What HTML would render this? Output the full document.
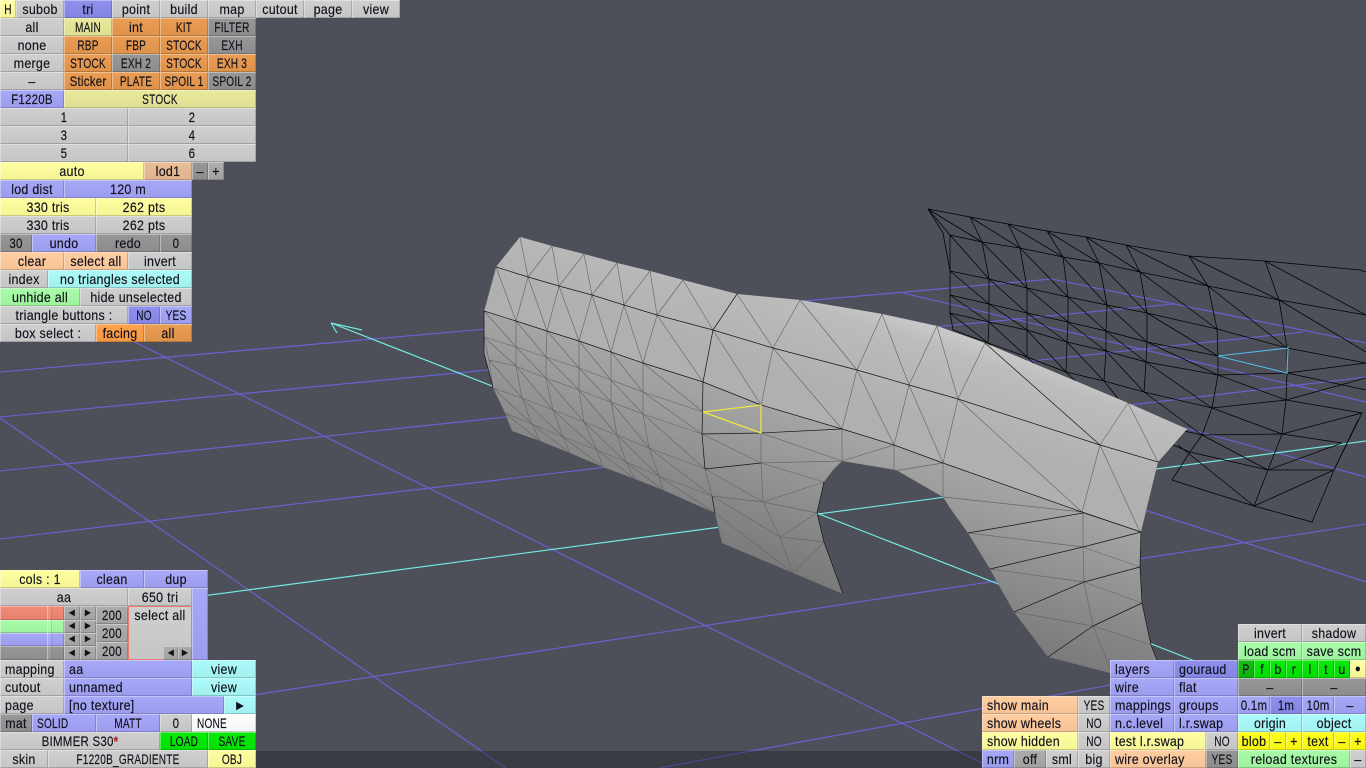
<!DOCTYPE html>
<html><head><meta charset="utf-8"><title>editor</title>
<style>
html,body{margin:0;padding:0;width:1366px;height:768px;overflow:hidden;background:#4d5058}
#v{position:relative;width:1366px;height:768px;overflow:hidden}
svg{position:absolute;left:0;top:0;display:block}
i{position:absolute;display:block;height:18px;font:normal 14px/18px "Liberation Sans",sans-serif;letter-spacing:.3px;color:#10101a;-webkit-text-stroke:.15px #10101a;white-space:nowrap;overflow:hidden;box-sizing:border-box;background-image:linear-gradient(rgba(255,255,255,.05),rgba(0,0,0,.04));box-shadow:inset 1px 1px 0 rgba(255,255,255,.36),inset -1px -1px 0 rgba(0,0,0,.18)}
u{text-decoration:none;position:absolute;left:50%;top:0;transform:translateX(-50%) scaleX(.89)}
u.U{transform:translateX(-50%) scaleX(.72)}
u.N{transform:translateX(-50%) scaleX(.82)}
.l u{left:5px;transform-origin:0 50%;transform:scaleX(.89)}
.l u.U{transform:scaleX(.72)}
.g{background-color:#cdcdcd}.d{background-color:#929292}.m{background-color:#a8a8a8}
.b{background-color:#a3a3f8}.k{background-color:#8a8aec}
.y{background-color:#ffff9c}.p{background-color:#e8e898}.Y{background-color:#ffff10}
.o{background-color:#e8984c}.O{background-color:#ff9e44}.c{background-color:#ffcb9c}.t{background-color:#e8bb92}
.a{background-color:#a8fafa}.n{background-color:#a4fca4}.G{background-color:#00e800}.P{background-color:#0cb80c}
.w{background-color:#fff}.r{background-color:#f08672}
.s u{font-size:11px}
.h{background:rgba(255,255,255,.1);box-shadow:inset 1px 0 0 rgba(255,255,255,.35),inset -1px 0 0 rgba(0,0,0,.12)}
</style></head><body><div id="v">
<svg width="1366" height="768" viewBox="0 0 1366 768" xmlns="http://www.w3.org/2000/svg">
<defs>
<linearGradient id="lo" gradientUnits="userSpaceOnUse" x1="700" y1="374" x2="650" y2="526"><stop offset="0" stop-color="#a8a8a8"/><stop offset="1" stop-color="#7a7a7a"/></linearGradient>
<linearGradient id="hi" gradientUnits="userSpaceOnUse" x1="1060" y1="470" x2="1100" y2="350"><stop offset="0" stop-color="#b0b0b0"/><stop offset=".6" stop-color="#bcbcbc"/><stop offset="1" stop-color="#dcdcdc"/></linearGradient>
</defs>
<g fill="none" stroke="#6a62dc" stroke-width="1.1">
<path d="M0 372L1052 279L1366 343"/>
<path d="M0 417L1173 304"/>
<path d="M0 471L1303 332"/>
<path d="M0 539L1366 377"/>
<path d="M0 734L1366 524"/>
<path d="M659 768L1110 685"/>
<path d="M903 293L1366 402"/>
<path d="M1100 405L1366 477"/>
<path d="M1000 463L1366 582"/>
<path d="M0 275L992 768"/>
<path d="M0 418L506 768"/>
</g>
<g fill="none" stroke="#74e6e0" stroke-width="1.2">
<path d="M0 623L1366 441"/>
<path d="M1200 663L331 323M331 323L362 330M331 323L337 333"/>
</g>
<!-- wire copy -->
<g fill="none" stroke="#000" stroke-width=".75">
<path d="M928 209L970 217L1008 224L1047 231L1086 237L1126 245L1189 256L1265 261L1360 270L1366 272"/>
<path d="M928 209L950 235L982 242L1020 248L1063 257L1099 263L1140 272L1208 286L1279 300L1366 315"/>
<path d="M928 209L943 233L950 271"/>
<path d="M950 271L989 279L1027 288L1068 297L1107 305L1147 313L1217 329L1287 348L1366 363"/>
<path d="M950 295L989 304L1027 313L1068 322L1106 331L1147 342L1218 356"/>
<path d="M950 313L989 322L1027 330L1067 342L1106 351L1146 362L1218 375L1287 373L1366 363"/>
<path d="M953 330L988 343L1027 357L1066 372L1104 381L1144 392L1212 408L1286 400L1366 378"/>
<path d="M1025 375L1062 390L1100 405L1135 420L1202 435L1282 434L1342 443"/>
<path d="M928 209L982 242M970 217L982 242M970 217L1020 248M1008 224L1020 248M1008 224L1063 257M1047 231L1063 257M1047 231L1099 263M1086 237L1099 263M1086 237L1140 272M1126 245L1140 272M1126 245L1208 286M1265 261L1366 315"/>
<path d="M1189 256L1208 286L1217 329L1218 356L1218 375L1212 408L1202 435L1190 452L1172 480L1254 506L1312 522L1334 470L1362 413"/>
<path d="M1189 256L1279 300M1265 261L1279 300L1287 348L1287 373L1286 400L1282 434L1268 470L1254 506L1334 470"/>
<path d="M950 235L950 271L950 295L950 313L953 330M982 242L989 279L989 304L989 322L988 343M1020 248L1027 288L1027 313L1027 330L1027 357M1063 257L1068 297L1068 322L1067 342L1066 372M1099 263L1107 305L1106 331L1106 351L1104 381M1140 272L1147 313L1147 342L1146 362L1144 392"/>
<path d="M950 235L989 279M982 242L1027 288M1020 248L1068 297M1063 257L1107 305M1099 263L1147 313M1140 272L1217 329M1208 286L1287 348M1279 300L1366 352"/>
<path d="M950 271L989 304M989 279L1027 313M1027 288L1068 322M1068 297L1106 331M1107 305L1147 342M1147 313L1218 356"/>
<path d="M950 295L989 322M989 304L1027 330M1027 313L1067 342M1068 322L1106 351M1106 331L1146 362M1147 342L1218 375"/>
<path d="M950 313L988 343M989 322L1027 357M1027 330L1066 372M1067 342L1104 381M1106 351L1144 392M1146 362L1212 408"/>
<path d="M988 343L1025 375M1027 357L1062 390M1066 372L1100 405M1104 381L1135 420M1144 392L1202 435"/>
<path d="M1218 375L1286 400M1212 408L1282 434M1286 400L1362 413M1287 373L1366 390M1282 434L1362 413"/>
<path d="M1178 445L1254 506M1173 445L1190 452L1268 470M1202 435L1268 470M1342 443L1268 470M1358 420L1334 470"/>
</g>
<path d="M1268 470L1334 470" stroke="#222" stroke-width="1.3" fill="none"/>
<path d="M1218 356L1288 348L1287 373Z" fill="none" stroke="#55b8e6" stroke-width="1.1"/>
<!-- body -->
<path fill="url(#lo)" d="M520 237L552 246L584 254L617 263L650 271L683 280L737 294L800 300L882 314L937 326L985 343L1128 403L1187 429L1158 462L1141 532L1140 567L1142 603L1151 645L1157 660L1160 690L1110 673L1048 657L1014 612L997 582L990 569L968 533L950 508L943 497L896 470L842 461L833 470L824 482L817 513L824 542L843 594L793 573L722 543L715 513L663 490L635 479L603 467L570 453L540 441L512 431L505 413L493 388L484 353L484 311L496 267Z"/>
<path fill="url(#hi)" d="M520 237L552 246L584 254L617 263L650 271L683 280L737 294L800 300L882 314L937 326L985 343L1128 403L1187 429L1158 462L1140 532L1082 512L943 463L894 445L842 429L761 405L703 382L643 363L611 352L579 341L547 331L516 321L484 311L496 267Z"/>
<g fill="none" stroke="#666" stroke-width=".65">
<path d="M520 237L528 277M552 246L528 277M552 246L559 286M584 254L559 286M584 254L592 295M617 263L592 295M617 263L624 305M650 271L624 305M650 271L657 315M683 280L657 315M683 280L713 330M737 294L773 348M800 300L773 348M800 300L857 370M882 314L857 370M882 314L909 385M937 326L909 385M937 326L958 399M985 343L958 399M1128 403L1100 445M1128 403L1158 462"/>
<path d="M496 267L484 311M496 267L516 321M528 277L516 321M528 277L547 331M559 286L547 331M559 286L579 341M592 295L579 341M592 295L611 352M624 305L611 352M624 305L643 363M657 315L643 363M657 315L703 382M713 330L761 405M773 348L761 405M773 348L842 429M857 370L842 429M857 370L894 445M909 385L894 445M909 385L943 463M958 399L943 463M958 399L1082 512M1100 445L1082 512M1100 445L1140 532"/>
<path d="M484 311L484 337L489 360L493 388L505 413L512 431M516 321L516 347L516 366L522 398L532 424L540 441M547 331L546 357L546 378L553 410L563 437L570 453M579 341L579 368L579 390L584 422L597 450L603 467M611 352L611 380L611 402L617 435L626 462L635 479M643 363L643 392L643 414L649 448L659 476L663 490"/>
<path d="M484 337L516 347L546 357L579 368L611 380L643 392L703 412M489 360L516 366L546 378L579 390L611 402L643 414L702 434M493 388L522 398L553 410L584 422L617 435L649 448L705 469M505 413L532 424L563 437L597 450L626 462L659 476L712 496"/>
<path d="M484 311L516 347M516 321L546 357M547 331L579 368M579 341L611 380M611 352L643 392M643 363L703 412M484 337L516 366M516 347L546 378M546 357L579 390M579 368L611 402M611 380L643 414M643 392L702 434M489 360L522 398M516 366L553 410M546 378L584 422M579 390L617 435M611 402L649 448M643 414L705 469M493 388L532 424M522 398L563 437M553 410L597 450M584 422L626 462M617 435L659 476M649 448L712 496M505 413L540 441M532 424L570 453M563 437L603 467M597 450L635 479M626 462L663 490M659 476L715 513"/>
<path d="M761 433L761 463L763 502M702 434L761 463M761 433L842 461M761 463L842 461M761 463L824 482M705 469L763 502M705 469L712 496L715 513L722 543M712 496L763 502L824 482M763 502L817 513M712 496L780 537M715 513L793 573M763 502L780 537L793 573M780 537L817 513M780 537L824 542M793 573L824 542M842 429L842 461M894 445L894 471M943 463L943 497M842 461L894 445M894 471L943 463"/>
<path d="M943 497L1082 512M968 533L1083 547M990 569L1084 582M1014 612L1093 626M1083 513L1083 547L1084 582L1093 626L1112 673M1083 513L1141 532M1083 547L1140 567M1084 582L1142 603M1093 626L1151 645"/>
</g>
<g fill="none" stroke="#151515" stroke-width=".7">
<path d="M496 267L528 277L559 286L592 295L624 305L657 315L713 330L773 348L857 370L909 385L958 399L1100 445L1158 462"/>
<path d="M484 311L516 321L547 331L579 341L611 352L643 363L703 382L761 405L842 429L894 445L943 463L1082 512L1141 532"/>
<path d="M705 469L702 434L703 382M737 294L713 330L703 382M985 343L1100 445M702 434L761 433L842 429M705 469L761 463M968 533L1083 513M990 569L1083 547M1014 612L1084 582M1048 657L1093 626M1083 547L1141 532M1084 582L1140 567M1093 626L1142 603"/>
<path d="M824 482L817 513L824 542L843 594M1141 532L1140 567L1142 603L1151 645L1157 660M484 311L484 353L493 388M712 496L715 513"/>
</g>
<path d="M703 412L761 405L761 433Z" fill="none" stroke="#f0e840" stroke-width="1.2"/>
<rect x="0" y="751" width="1366" height="17" fill="#1c1c22" fill-opacity=".38"/>
</svg>

<i class="y" style="left:0;top:0;width:16px"><u class="U">H</u></i>
<i class="g" style="left:16px;top:0;width:48px"><u>subob</u></i>
<i class="k" style="left:64px;top:0;width:48px"><u>tri</u></i>
<i class="g" style="left:112px;top:0;width:48px"><u>point</u></i>
<i class="g" style="left:160px;top:0;width:48px"><u>build</u></i>
<i class="g" style="left:208px;top:0;width:48px"><u>map</u></i>
<i class="g" style="left:256px;top:0;width:48px"><u>cutout</u></i>
<i class="g" style="left:304px;top:0;width:48px"><u>page</u></i>
<i class="g" style="left:352px;top:0;width:48px"><u>view</u></i>

<i class="g" style="left:0;top:18px;width:64px"><u>all</u></i>
<i class="p" style="left:64px;top:18px;width:48px"><u class="U">MAIN</u></i>
<i class="o" style="left:112px;top:18px;width:48px"><u>int</u></i>
<i class="o" style="left:160px;top:18px;width:48px"><u class="U">KIT</u></i>
<i class="d" style="left:208px;top:18px;width:48px"><u class="U">FILTER</u></i>
<i class="g" style="left:0;top:36px;width:64px"><u>none</u></i>
<i class="o" style="left:64px;top:36px;width:48px"><u class="U">RBP</u></i>
<i class="o" style="left:112px;top:36px;width:48px"><u class="U">FBP</u></i>
<i class="o" style="left:160px;top:36px;width:48px"><u class="U">STOCK</u></i>
<i class="d" style="left:208px;top:36px;width:48px"><u class="U">EXH</u></i>
<i class="g" style="left:0;top:54px;width:64px"><u>merge</u></i>
<i class="o" style="left:64px;top:54px;width:48px"><u class="U">STOCK</u></i>
<i class="d" style="left:112px;top:54px;width:48px"><u class="U">EXH 2</u></i>
<i class="o" style="left:160px;top:54px;width:48px"><u class="U">STOCK</u></i>
<i class="o" style="left:208px;top:54px;width:48px"><u class="U">EXH 3</u></i>
<i class="g" style="left:0;top:72px;width:64px"><u>–</u></i>
<i class="o" style="left:64px;top:72px;width:48px"><u class="N">Sticker</u></i>
<i class="o" style="left:112px;top:72px;width:48px"><u class="U">PLATE</u></i>
<i class="o" style="left:160px;top:72px;width:48px"><u class="U">SPOIL 1</u></i>
<i class="d" style="left:208px;top:72px;width:48px"><u class="U">SPOIL 2</u></i>
<i class="b" style="left:0;top:90px;width:64px"><u class="N">F1220B</u></i>
<i class="p" style="left:64px;top:90px;width:192px"><u class="U">STOCK</u></i>
<i class="g" style="left:0;top:108px;width:128px"><u class="N">1</u></i>
<i class="g" style="left:128px;top:108px;width:128px"><u class="N">2</u></i>
<i class="g" style="left:0;top:126px;width:128px"><u class="N">3</u></i>
<i class="g" style="left:128px;top:126px;width:128px"><u class="N">4</u></i>
<i class="g" style="left:0;top:144px;width:128px"><u class="N">5</u></i>
<i class="g" style="left:128px;top:144px;width:128px"><u class="N">6</u></i>
<i class="y" style="left:0;top:162px;width:144px"><u>auto</u></i>
<i class="t" style="left:144px;top:162px;width:48px"><u>lod1</u></i>
<i class="d" style="left:192px;top:162px;width:16px"><u>–</u></i>
<i class="m" style="left:208px;top:162px;width:16px"><u>+</u></i>
<i class="b" style="left:0;top:180px;width:64px"><u>lod dist</u></i>
<i class="b" style="left:64px;top:180px;width:128px"><u>120 m</u></i>
<i class="y" style="left:0;top:198px;width:96px"><u>330 tris</u></i>
<i class="y" style="left:96px;top:198px;width:96px"><u>262 pts</u></i>
<i class="g" style="left:0;top:216px;width:96px"><u>330 tris</u></i>
<i class="g" style="left:96px;top:216px;width:96px"><u>262 pts</u></i>
<i class="d" style="left:0;top:234px;width:32px"><u class="N">30</u></i>
<i class="b" style="left:32px;top:234px;width:64px"><u>undo</u></i>
<i class="d" style="left:96px;top:234px;width:64px"><u>redo</u></i>
<i class="d" style="left:160px;top:234px;width:32px"><u class="N">0</u></i>
<i class="c" style="left:0;top:252px;width:64px"><u>clear</u></i>
<i class="c" style="left:64px;top:252px;width:64px"><u>select all</u></i>
<i class="g" style="left:128px;top:252px;width:64px"><u>invert</u></i>
<i class="g" style="left:0;top:270px;width:48px"><u>index</u></i>
<i class="a" style="left:48px;top:270px;width:144px"><u>no triangles selected</u></i>
<i class="n" style="left:0;top:288px;width:80px"><u>unhide all</u></i>
<i class="g" style="left:80px;top:288px;width:112px"><u>hide unselected</u></i>
<i class="g" style="left:0;top:306px;width:128px"><u>triangle buttons :</u></i>
<i class="k" style="left:128px;top:306px;width:32px"><u class="U">NO</u></i>
<i class="b" style="left:160px;top:306px;width:32px"><u class="U">YES</u></i>
<i class="g" style="left:0;top:324px;width:96px"><u>box select :</u></i>
<i class="O" style="left:96px;top:324px;width:48px"><u>facing</u></i>
<i class="o" style="left:144px;top:324px;width:48px"><u>all</u></i>

<i class="y" style="left:0;top:570px;width:80px"><u>cols : 1</u></i>
<i class="b" style="left:80px;top:570px;width:64px"><u>clean</u></i>
<i class="b" style="left:144px;top:570px;width:64px"><u>dup</u></i>
<i class="g" style="left:0;top:588px;width:128px"><u>aa</u></i>
<i class="g" style="left:128px;top:588px;width:64px"><u>650 tri</u></i>
<i class="b" style="left:192px;top:588px;width:16px;height:72px"></i>
<i class="r" style="left:0;top:606px;width:64px;height:14px"></i>
<i class="n" style="left:0;top:620px;width:64px;height:13px"></i>
<i class="b" style="left:0;top:633px;width:64px;height:13px"></i>
<i class="d" style="left:0;top:646px;width:64px;height:14px"></i>
<i class="h" style="left:47px;top:606px;width:5px;height:54px"></i>
<i class="m s" style="left:64px;top:606px;width:16px;height:14px;line-height:14px"><u>◄</u></i>
<i class="m s" style="left:80px;top:606px;width:16px;height:14px;line-height:14px"><u>►</u></i>
<i class="m s" style="left:64px;top:620px;width:16px;height:13px;line-height:13px"><u>◄</u></i>
<i class="m s" style="left:80px;top:620px;width:16px;height:13px;line-height:13px"><u>►</u></i>
<i class="m s" style="left:64px;top:633px;width:16px;height:13px;line-height:13px"><u>◄</u></i>
<i class="m s" style="left:80px;top:633px;width:16px;height:13px;line-height:13px"><u>►</u></i>
<i class="m s" style="left:64px;top:646px;width:16px;height:14px;line-height:14px"><u>◄</u></i>
<i class="m s" style="left:80px;top:646px;width:16px;height:14px;line-height:14px"><u>►</u></i>
<i class="m" style="left:96px;top:606px;width:32px"><u class="N">200</u></i>
<i class="m" style="left:96px;top:624px;width:32px"><u class="N">200</u></i>
<i class="m" style="left:96px;top:642px;width:32px"><u class="N">200</u></i>
<i class="g" style="left:128px;top:606px;width:64px;height:54px;box-shadow:inset 0 0 0 1px #f07868"><u>select all</u></i>
<i class="m s" style="left:163px;top:646px;width:15px;height:14px;line-height:14px"><u>◄</u></i>
<i class="m s" style="left:178px;top:646px;width:14px;height:14px;line-height:14px"><u>►</u></i>
<i class="g l" style="left:0;top:660px;width:64px"><u>mapping</u></i>
<i class="b l" style="left:64px;top:660px;width:128px"><u>aa</u></i>
<i class="a" style="left:192px;top:660px;width:64px"><u>view</u></i>
<i class="g l" style="left:0;top:678px;width:64px"><u>cutout</u></i>
<i class="b l" style="left:64px;top:678px;width:128px"><u>unnamed</u></i>
<i class="a" style="left:192px;top:678px;width:64px"><u>view</u></i>
<i class="g l" style="left:0;top:696px;width:64px"><u>page</u></i>
<i class="b l" style="left:64px;top:696px;width:160px"><u>[no texture]</u></i>
<i class="a s" style="left:224px;top:696px;width:32px"><u style="font-size:14px">►</u></i>
<i class="d" style="left:0;top:714px;width:32px"><u>mat</u></i>
<i class="b l" style="left:32px;top:714px;width:64px"><u class="U">SOLID</u></i>
<i class="b" style="left:96px;top:714px;width:64px"><u class="U">MATT</u></i>
<i class="g" style="left:160px;top:714px;width:32px"><u class="N">0</u></i>
<i class="w l" style="left:192px;top:714px;width:64px"><u class="U">NONE</u></i>
<i class="g" style="left:0;top:732px;width:160px"><u class="N">BIMMER S30<span style="color:#f02020;font-weight:bold">*</span></u></i>
<i class="G" style="left:160px;top:732px;width:48px"><u class="U">LOAD</u></i>
<i class="G" style="left:208px;top:732px;width:48px"><u class="U">SAVE</u></i>
<i class="g" style="left:0;top:750px;width:48px"><u>skin</u></i>
<i class="g" style="left:48px;top:750px;width:160px"><u class="U">F1220B_GRADIENTE</u></i>
<i class="y" style="left:208px;top:750px;width:48px"><u class="U">OBJ</u></i>

<i class="g" style="left:1238px;top:624px;width:64px"><u>invert</u></i>
<i class="g" style="left:1302px;top:624px;width:64px"><u>shadow</u></i>
<i class="n" style="left:1238px;top:642px;width:64px"><u>load scm</u></i>
<i class="n" style="left:1302px;top:642px;width:64px"><u>save scm</u></i>
<i class="b l" style="left:1110px;top:660px;width:64px"><u>layers</u></i>
<i class="k l" style="left:1174px;top:660px;width:64px"><u>gouraud</u></i>
<i class="P" style="left:1238px;top:660px;width:16px"><u class="U">P</u></i>
<i class="G" style="left:1254px;top:660px;width:16px"><u>f</u></i>
<i class="G" style="left:1270px;top:660px;width:16px"><u>b</u></i>
<i class="G" style="left:1286px;top:660px;width:16px"><u>r</u></i>
<i class="G" style="left:1302px;top:660px;width:16px"><u>l</u></i>
<i class="G" style="left:1318px;top:660px;width:16px"><u>t</u></i>
<i class="G" style="left:1334px;top:660px;width:16px"><u>u</u></i>
<i class="y" style="left:1350px;top:660px;width:16px"><u style="font-size:11px">●</u></i>
<i class="b l" style="left:1110px;top:678px;width:64px"><u>wire</u></i>
<i class="b l" style="left:1174px;top:678px;width:64px"><u>flat</u></i>
<i class="d" style="left:1238px;top:678px;width:64px"><u>–</u></i>
<i class="d" style="left:1302px;top:678px;width:64px"><u>–</u></i>
<i class="c l" style="left:982px;top:696px;width:96px"><u>show main</u></i>
<i class="g" style="left:1078px;top:696px;width:32px"><u class="U">YES</u></i>
<i class="b l" style="left:1110px;top:696px;width:64px"><u>mappings</u></i>
<i class="b l" style="left:1174px;top:696px;width:64px"><u>groups</u></i>
<i class="b" style="left:1238px;top:696px;width:32px"><u class="N">0.1m</u></i>
<i class="k" style="left:1270px;top:696px;width:32px"><u class="N">1m</u></i>
<i class="b" style="left:1302px;top:696px;width:32px"><u class="N">10m</u></i>
<i class="b" style="left:1334px;top:696px;width:32px"><u>–</u></i>
<i class="c l" style="left:982px;top:714px;width:96px"><u>show wheels</u></i>
<i class="g" style="left:1078px;top:714px;width:32px"><u class="U">NO</u></i>
<i class="b l" style="left:1110px;top:714px;width:64px"><u>n.c.level</u></i>
<i class="b l" style="left:1174px;top:714px;width:64px"><u>l.r.swap</u></i>
<i class="a" style="left:1238px;top:714px;width:64px"><u>origin</u></i>
<i class="a" style="left:1302px;top:714px;width:64px"><u>object</u></i>
<i class="y l" style="left:982px;top:732px;width:96px"><u>show hidden</u></i>
<i class="g" style="left:1078px;top:732px;width:32px"><u class="U">NO</u></i>
<i class="y l" style="left:1110px;top:732px;width:96px"><u>test l.r.swap</u></i>
<i class="g" style="left:1206px;top:732px;width:32px"><u class="U">NO</u></i>
<i class="Y" style="left:1238px;top:732px;width:32px"><u>blob</u></i>
<i class="Y" style="left:1270px;top:732px;width:16px"><u>–</u></i>
<i class="Y" style="left:1286px;top:732px;width:16px"><u>+</u></i>
<i class="Y" style="left:1302px;top:732px;width:32px"><u>text</u></i>
<i class="Y" style="left:1334px;top:732px;width:16px"><u>–</u></i>
<i class="Y" style="left:1350px;top:732px;width:16px"><u>+</u></i>
<i class="b" style="left:982px;top:750px;width:32px"><u>nrm</u></i>
<i class="m" style="left:1014px;top:750px;width:32px"><u>off</u></i>
<i class="g" style="left:1046px;top:750px;width:32px"><u>sml</u></i>
<i class="g" style="left:1078px;top:750px;width:32px"><u>big</u></i>
<i class="c l" style="left:1110px;top:750px;width:96px"><u>wire overlay</u></i>
<i class="d" style="left:1206px;top:750px;width:32px"><u class="U">YES</u></i>
<i class="n" style="left:1238px;top:750px;width:112px"><u>reload textures</u></i>
<i class="g" style="left:1350px;top:750px;width:16px"><u>–</u></i>
</div></body></html>
